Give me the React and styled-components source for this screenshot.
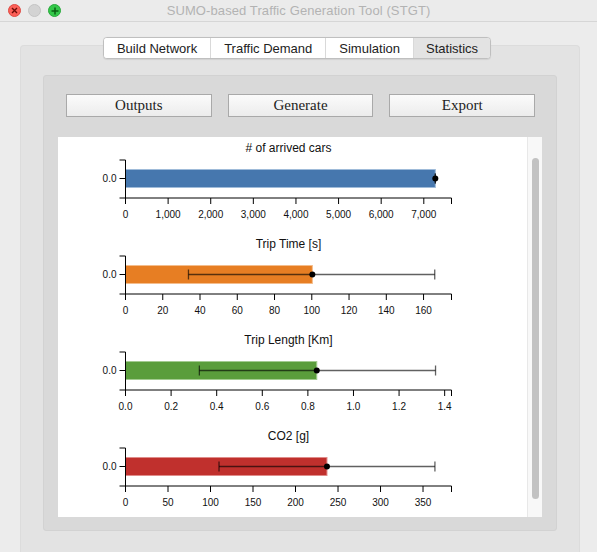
import styled, { createGlobalStyle } from 'styled-components';

const GlobalStyle = createGlobalStyle`
	body {
		margin: 0;
		background: #ececec;
		font-family: 'Liberation Sans', Arial, sans-serif;
		overflow: hidden;
	}
`;

const CHARTS = [
	{
		title: '# of arrived cars',
		color: '#4677ae',
		edge: '#9fbbd9',
		max: 7650,
		step: 1000,
		last: 7000,
		fmt: (n) => n.toLocaleString('en-US'),
		value: 7270,
		lo: 7270,
		hi: 7270,
	},
	{
		title: 'Trip Time [s]',
		color: '#e77e23',
		edge: '#f4bd8c',
		max: 175,
		step: 20,
		last: 160,
		fmt: (n) => String(n),
		value: 100.3,
		lo: 33.8,
		hi: 166,
	},
	{
		title: 'Trip Length [Km]',
		color: '#5a9d3b',
		edge: '#a3cb90',
		max: 1.43,
		step: 0.2,
		last: 1.4,
		fmt: (n) => n.toFixed(1),
		value: 0.839,
		lo: 0.324,
		hi: 1.36,
	},
	{
		title: 'CO2 [g]',
		color: '#c0302d',
		edge: '#e08c8a',
		max: 383.5,
		step: 50,
		last: 350,
		fmt: (n) => String(n),
		value: 237,
		lo: 110,
		hi: 364,
	},
];

const X0 = 67.5;
const PLOT_W = 326;
const Y_TOP = 23;
const Y_BOT = 61;
const Y_MID = 41.5;

const Window = styled.div`
	width: 597px;
	height: 552px;
	display: flex;
	flex-direction: column;
	overflow: hidden;
`;

const TitleBar = styled.div`
	height: 21px;
	display: grid;
	grid-template-columns: 1fr auto 1fr;
	align-items: center;
	background: #ebebeb;
	border-bottom: 1px solid #d6d6d6;
`;

const Lights = styled.div`
	display: flex;
	gap: 7px;
	padding-left: 8px;
`;

const Light = styled.span`
	width: 13px;
	height: 13px;
	border-radius: 50%;
	background: ${(p) => p.$bg};
	border: 0.5px solid ${(p) => p.$rim};
	box-sizing: border-box;
	display: flex;
	align-items: center;
	justify-content: center;
`;

const TitleText = styled.div`
	font-size: 13px;
	color: #b3b3b3;
	letter-spacing: 0.1px;
`;

const Body = styled.div`
	flex: 1;
	padding: 23px 17px 0 20px;
	display: flex;
	flex-direction: column;
`;

const TabPane = styled.div`
	flex: 1;
	background: #e3e3e3;
	border: 1px solid #dcdcdc;
	border-bottom: none;
	border-radius: 4px 4px 0 0;
	padding: 0 22px;
	display: flex;
	flex-direction: column;
`;

const TabBar = styled.div`
	align-self: center;
	margin: -9px 0 0 -6px;
	display: flex;
	height: 20px;
	border: 1px solid #bfbfbf;
	border-radius: 4px;
	overflow: hidden;
	background: #fff;
	box-shadow: 0 0.5px 1px rgba(0, 0, 0, 0.08);
`;

const Tab = styled.div`
	font-size: 13px;
	color: #222;
	display: flex;
	align-items: center;
	padding: 0 ${(p) => p.$pad}px;
	background: ${(p) => (p.$active ? '#e3e3e3' : '#fff')};
	& + & {
		border-left: 1px solid #d9d9d9;
	}
`;

const GroupBox = styled.div`
	margin-top: 16px;
	height: 456px;
	box-sizing: border-box;
	background: #d9d9d9;
	border: 1px solid #d2d2d2;
	border-radius: 3px;
	padding: 18px 14px 13px 14px;
	display: flex;
	flex-direction: column;
`;

const ButtonRow = styled.div`
	display: flex;
	gap: 16px;
	padding: 0 7px 0 8px;
`;

const ActionButton = styled.button`
	flex: 1;
	height: 23px;
	border: 1px solid #a9a9a9;
	background: linear-gradient(#fbfbfb, #ececec);
	font-family: 'Liberation Serif', 'Times New Roman', serif;
	font-size: 15px;
	color: #222;
	padding: 0;
`;

const ChartScroll = styled.div`
	margin-top: 20px;
	height: 380px;
	display: flex;
	background: #fff;
	overflow: hidden;
`;

const ChartList = styled.div`
	flex: 1;
	display: flex;
	flex-direction: column;
`;

const Scrollbar = styled.div`
	width: 14px;
	background: #f8f8f8;
	border-left: 1px solid #e8e8e8;
	padding: 21px 3px 18px 4px;
	display: flex;
`;

const Thumb = styled.div`
	flex: 1;
	border-radius: 4px;
	background: #c2c2c2;
`;

const ChartSvg = styled.svg`
	display: block;
	flex: none;
	font-family: 'Liberation Sans', Arial, sans-serif;
`;

const Chart = ({ c }) => {
	const sx = (v) => X0 + (v / c.max) * PLOT_W;
	const ticks = [];
	for (let i = 0; i * c.step <= c.last + 1e-9; i++) ticks.push(i * c.step);
	const end = X0 + PLOT_W;
	const errColor = 'rgba(0,0,0,0.62)';
	return (
		<ChartSvg width="469" height="96" viewBox="0 0 469 96">
			<text x={X0 + PLOT_W / 2} y="15" textAnchor="middle" fontSize="12" fill="#111">
				{c.title}
			</text>
			<rect
				x={X0}
				y={Y_MID - 9}
				width={sx(c.value) - X0}
				height="18"
				fill={c.color}
				stroke={c.edge}
				strokeWidth="1"
			/>
			<line x1={sx(c.lo)} x2={sx(c.hi)} y1={Y_MID} y2={Y_MID} stroke={errColor} strokeWidth="1.3" />
			<line x1={sx(c.lo)} x2={sx(c.lo)} y1={Y_MID - 5} y2={Y_MID + 5} stroke={errColor} strokeWidth="1.3" />
			<line x1={sx(c.hi)} x2={sx(c.hi)} y1={Y_MID - 5} y2={Y_MID + 5} stroke={errColor} strokeWidth="1.3" />
			<circle cx={sx(c.value)} cy={Y_MID} r="3" fill="#000" />
			<path
				d={`M${X0 - 6},${Y_TOP} H${X0} V${Y_BOT} H${X0 - 6}`}
				fill="none"
				stroke="#000"
				strokeWidth="1"
			/>
			<line x1={X0 - 6} x2={X0} y1={Y_MID} y2={Y_MID} stroke="#000" />
			<text x={X0 - 9} y={Y_MID + 3.5} textAnchor="end" fontSize="10" fill="#111">
				0.0
			</text>
			<path d={`M${X0},${Y_BOT + 6} V${Y_BOT} H${end} V${Y_BOT + 6}`} fill="none" stroke="#000" />
			{ticks.map((t) => (
				<g key={t}>
					<line x1={sx(t)} x2={sx(t)} y1={Y_BOT} y2={Y_BOT + 6} stroke="#000" />
					<text x={sx(t)} y={Y_BOT + 19.5} textAnchor="middle" fontSize="10" fill="#111">
						{c.fmt(t)}
					</text>
				</g>
			))}
		</ChartSvg>
	);
};

export default function App() {
	const tabs = [
		{ label: 'Build Network', pad: 13 },
		{ label: 'Traffic Demand', pad: 13 },
		{ label: 'Simulation', pad: 13 },
		{ label: 'Statistics', pad: 12, active: true },
	];
	return (
		<Window>
			<GlobalStyle />
			<TitleBar>
				<Lights>
					<Light $bg="#fc5f57" $rim="#de4a42">
						<svg width="7" height="7" viewBox="0 0 7 7">
							<path d="M1 1 L6 6 M6 1 L1 6" stroke="#6b0a06" strokeWidth="1.4" />
						</svg>
					</Light>
					<Light $bg="#d3d3d3" $rim="#c4c4c4" />
					<Light $bg="#34c84a" $rim="#27a93a">
						<svg width="8" height="8" viewBox="0 0 8 8">
							<path d="M4 0.5 V7.5 M0.5 4 H7.5" stroke="#0b5e14" strokeWidth="1.5" />
						</svg>
					</Light>
				</Lights>
				<TitleText>SUMO-based Traffic Generation Tool (STGT)</TitleText>
				<div />
			</TitleBar>
			<Body>
				<TabPane>
					<TabBar>
						{tabs.map((t) => (
							<Tab key={t.label} $pad={t.pad} $active={t.active}>
								{t.label}
							</Tab>
						))}
					</TabBar>
					<GroupBox>
						<ButtonRow>
							<ActionButton>Outputs</ActionButton>
							<ActionButton>Generate</ActionButton>
							<ActionButton>Export</ActionButton>
						</ButtonRow>
						<ChartScroll>
							<ChartList>
								{CHARTS.map((c) => (
									<Chart key={c.title} c={c} />
								))}
							</ChartList>
							<Scrollbar>
								<Thumb />
							</Scrollbar>
						</ChartScroll>
					</GroupBox>
				</TabPane>
			</Body>
		</Window>
	);
}
